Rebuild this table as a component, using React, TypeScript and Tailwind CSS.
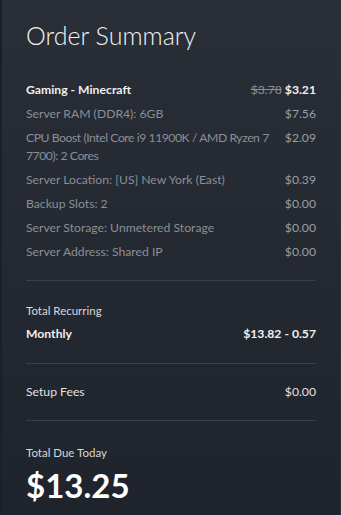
import React from 'react';

type Item = { label: string[]; price: string; old?: string; main?: boolean; tight?: boolean };

const items: Item[] = [
  { label: ['Gaming - Minecraft'], price: '$3.21', old: '$3.78', main: true },
  { label: ['Server RAM (DDR4): 6GB'], price: '$7.56' },
  { label: ['CPU Boost (Intel Core i9 11900K / AMD Ryzen 7', '7700): 2 Cores'], price: '$2.09', tight: true },
  { label: ['Server Location: [US] New York (East)'], price: '$0.39' },
  { label: ['Backup Slots: 2'], price: '$0.00' },
  { label: ['Server Storage: Unmetered Storage'], price: '$0.00' },
  { label: ['Server Address: Shared IP'], price: '$0.00' },
];

const OrderSummary: React.FC = () => {
  return (
    <div className="flex w-[341px] h-[515px] overflow-hidden bg-[#1b1f26] font-['Lato',sans-serif]">
      <div className="ml-[2px] flex-1 flex flex-col bg-gradient-to-b from-[#2a2e36] to-[#1f232b] pl-[24px] pr-[24px] pt-[19px] border-r border-[#2e333b]">
        <h2 className="text-[25px] leading-[32px] font-light text-[#f2f2f2]">Order Summary</h2>

        <div className="mt-[30px] flex flex-col gap-[6px] text-[12.2px] leading-[18px]">
          {items.map((it) => (
            <div key={it.label[0]} className="flex justify-between gap-2">
              <div
                className={
                  (it.main ? 'font-bold text-[#f0f0f0]' : 'text-[#8a8f97]') +
                  (it.tight ? ' tracking-[-0.45px]' : '')
                }
              >
                {it.label.map((l) => (
                  <div key={l} className="whitespace-nowrap">
                    {l}
                  </div>
                ))}
              </div>
              <span className={it.main ? 'shrink-0 font-bold text-[#f0f0f0]' : 'shrink-0 text-[#9a9ea5]'}>
                {it.old && <s className="mr-[3px] font-normal text-[#8a8f97]">{it.old}</s>}
                {it.price}
              </span>
            </div>
          ))}
        </div>

        <div className="mt-[19px] border-t border-[#3a3f48]" />

        <div className="pt-[22px] pb-[20px]">
          <div className="text-[11.5px] leading-[16px] text-[#d8d9db]">Total Recurring</div>
          <div className="mt-[6px] flex justify-between text-[12.2px] leading-[18px] font-bold text-[#f0f0f0]">
            <span>Monthly</span>
            <span>$13.82 - 0.57</span>
          </div>
        </div>

        <div className="border-t border-[#3a3f48]" />

        <div className="py-[19px] flex justify-between text-[12.2px] leading-[18px] text-[#e0e1e3]">
          <span>Setup Fees</span>
          <span>$0.00</span>
        </div>

        <div className="border-t border-[#3a3f48]" />

        <div className="pt-[24px]">
          <div className="text-[11.5px] leading-[16px] text-[#d8d9db]">Total Due Today</div>
          <div className="mt-[4px] text-[33px] leading-[40px] font-bold text-white">$13.25</div>
        </div>
      </div>
    </div>
  );
};

export default function App() {
  return <OrderSummary />;
}
